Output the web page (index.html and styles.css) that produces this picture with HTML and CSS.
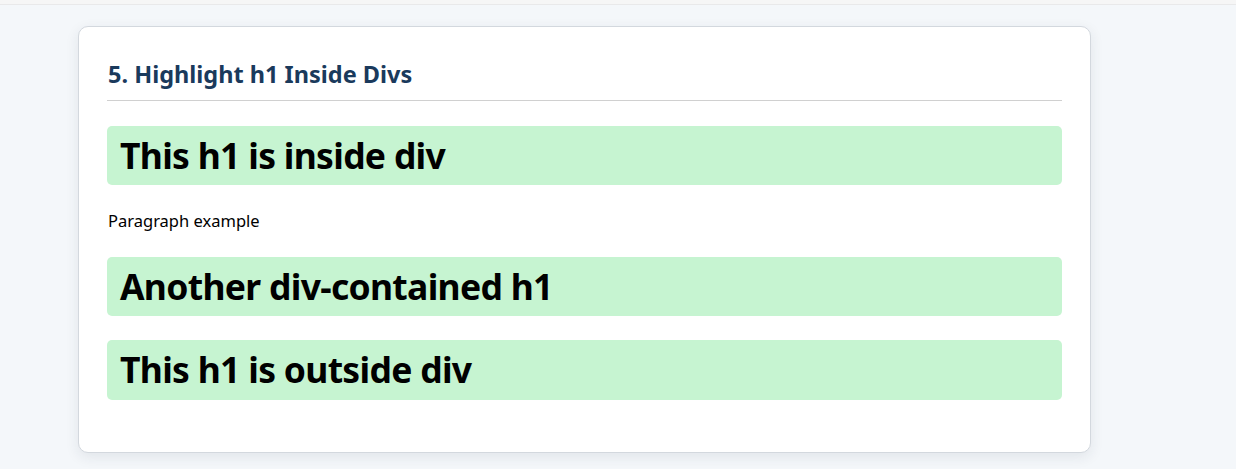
FILE: index.html
```html
<!DOCTYPE html>
<html lang="en">
<head>
<meta charset="utf-8">
<title>Highlight h1 Inside Divs</title>
<link rel="stylesheet" href="styles.css">
</head>
<body>
<div class="top-strip"></div>
<section class="card">
  <h2 class="card-title">5. Highlight h1 Inside Divs</h2>
  <div class="block"><h1 class="hl">This h1 is inside div</h1></div>
  <p class="para">Paragraph example</p>
  <div class="block"><h1 class="hl">Another div-contained h1</h1></div>
  <h1 class="hl last">This h1 is outside div</h1>
</section>
</body>
</html>
```

FILE: styles.css
```css
html, body {
  margin: 0;
  padding: 0;
}
body {
  background: #f4f7fa;
  font-family: "Noto Sans", "Open Sans", sans-serif;
  color: #000;
  height: 469px;
  overflow: hidden;
}
.top-strip {
  height: 4px;
  background: #f6f6f6;
  border-bottom: 1px solid #e9e9ea;
}
.card {
  margin: 21px 0 0 78px;
  width: 955px;
  padding: 28px;
  background: #fff;
  border: 1px solid #d3d8de;
  border-radius: 10px;
  box-shadow: 0 4px 14px rgba(30, 45, 70, 0.09);
}
.card-title {
  margin: 0 0 25px;
  padding: 4px 0 11px 1px;
  font-size: 23.5px;
  line-height: 30px;
  font-weight: 700;
  color: #1a3a5c;
  border-bottom: 1px solid #d0d0d0;
}
.block {
  margin: 0 0 24px;
}
.hl {
  margin: 0 0 24px;
  padding: 10px 13px;
  font-size: 35.5px;
  letter-spacing: -0.7px;
  line-height: 39px;
  font-weight: 700;
  background: #c6f4d1;
  border-radius: 5px;
}
.hl.last {
  padding-bottom: 11px;
}
.block .hl {
  margin: 0;
}
.para {
  margin: 0 0 24px;
  padding-left: 1px;
  font-size: 16.5px;
  line-height: 24px;
}
```
